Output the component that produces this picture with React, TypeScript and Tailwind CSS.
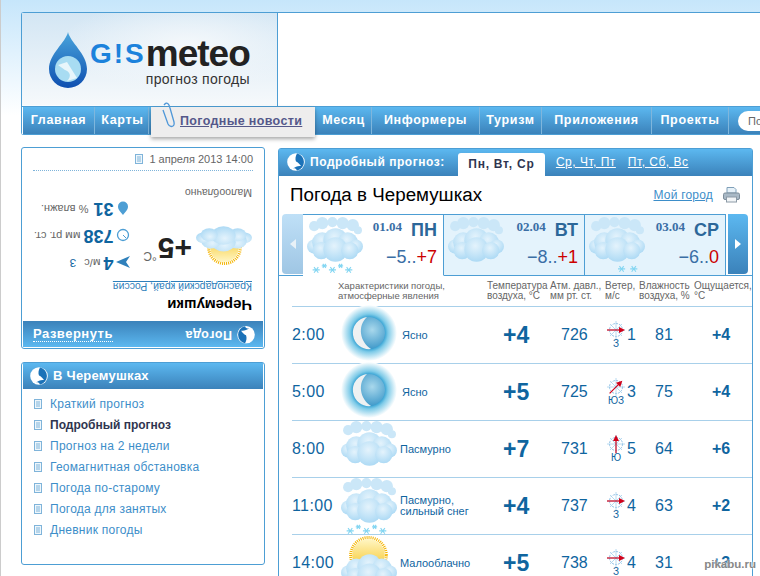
import { FC, useId } from 'react';

const navLeft = [
  { label: 'Главная', width: 'w-[72px]' },
  { label: 'Карты', width: 'w-[54px] pl-[2px]' },
];

const navRight = [
  { label: 'Месяц', width: 'w-[56px]' },
  { label: 'Информеры', width: 'w-[108px]' },
  { label: 'Туризм', width: 'w-[62px]' },
  { label: 'Приложения', width: 'w-[110px]' },
  { label: 'Проекты', width: 'w-[77px]' },
];

const menu = [
  'Краткий прогноз',
  'Подробный прогноз',
  'Прогноз на 2 недели',
  'Геомагнитная обстановка',
  'Погода по-старому',
  'Погода для занятых',
  'Дневник погоды',
];

const days = [
  { date: '01.04', name: 'ПН', low: '−5', high: '+7', snow: 4, active: true },
  { date: '02.04', name: 'ВТ', low: '−8', high: '+1', snow: 0, active: false },
  { date: '03.04', name: 'СР', low: '−6', high: '0', snow: 2, active: false },
];

type Weather = 'moon' | 'overcast' | 'snow' | 'sun';

const rows: {
  time: string;
  icon: Weather;
  desc: string[];
  temp: string;
  press: number;
  angle: number;
  dir: string;
  wind: number;
  humidity: number;
  feels: string;
}[] = [
  { time: '2:00', icon: 'moon', desc: ['Ясно'], temp: '+4', press: 726, angle: 0, dir: 'З', wind: 1, humidity: 81, feels: '+4' },
  { time: '5:00', icon: 'moon', desc: ['Ясно'], temp: '+5', press: 725, angle: -45, dir: 'ЮЗ', wind: 3, humidity: 75, feels: '+4' },
  { time: '8:00', icon: 'overcast', desc: ['Пасмурно'], temp: '+7', press: 731, angle: -90, dir: 'Ю', wind: 5, humidity: 64, feels: '+6' },
  { time: '11:00', icon: 'snow', desc: ['Пасмурно,', 'сильный снег'], temp: '+4', press: 737, angle: 0, dir: 'З', wind: 4, humidity: 63, feels: '+2' },
  { time: '14:00', icon: 'sun', desc: ['Малооблачно'], temp: '+5', press: 738, angle: 0, dir: 'З', wind: 4, humidity: 31, feels: '+3' },
];

const Swirl: FC<{ size?: number }> = ({ size = 18 }) => (
  <svg width={size} height={size} viewBox="0 0 18 18" className="shrink-0">
    <circle cx="9" cy="9" r="8.8" fill="#fff" />
    <path d="M10 .4A8.8 8.8 0 0 1 10 17.6C9 15 7 15 5.5 15.5 8.5 14 10.5 12.5 14 13 12 10.5 10.5 9 9 8.5 8 6 8.5 3 10 .4Z" fill="#1b72b8" />
  </svg>
);

const DocIcon: FC = () => (
  <svg width="8" height="10" viewBox="0 0 8 10" className="shrink-0">
    <rect x=".5" y=".5" width="7" height="9" fill="#eef6fb" stroke="#7fb4da" />
    <path d="M2 3h4M2 5h4M2 7h4" stroke="#7fb4da" />
  </svg>
);

const Snowflake: FC<{ x: number; y: number; r?: number }> = ({ x, y, r = 3.5 }) => (
  <g stroke="#84d6f2" strokeWidth="1.1">
    <path d={`M${x - r} ${y}H${x + r}M${x - r * 0.6} ${y - r * 0.8}L${x + r * 0.6} ${y + r * 0.8}M${x - r * 0.6} ${y + r * 0.8}L${x + r * 0.6} ${y - r * 0.8}`} />
  </g>
);

// puffs of the heavy front cloud, viewBox units 55 x 57
const frontPuffs: [number, number, number][] = [
  [7, 29, 7],
  [15, 25, 10],
  [28, 23, 12],
  [40, 25, 10],
  [48, 29, 7],
  [14, 33, 8.5],
  [28, 32, 12],
  [42, 33, 8.5],
];

const backPuffs: [number, number, number][] = [
  [7, 9, 5],
  [15, 6, 6],
  [25, 5, 5],
  [35, 6, 6],
  [45, 8, 6],
  [50, 13, 4],
];

const Cloud: FC<{ snow?: number; back?: boolean; sun?: boolean; compact?: boolean }> = ({ snow = 0, back = true, sun = false, compact = false }) => {
  const id = useId();
  return (
    <svg width="56" height="58" viewBox="0 0 55 57" className="shrink-0">
      <defs>
        <radialGradient id={`${id}c`} cx="45%" cy="35%" r="70%">
          <stop offset="0%" stopColor="#e4f3fc" />
          <stop offset="100%" stopColor="#a9d8f4" />
        </radialGradient>
        <linearGradient id={`${id}s`} x1="0" y1="0" x2="0" y2="1">
          <stop offset="0%" stopColor="#fff6c4" />
          <stop offset="100%" stopColor="#f5c21e" />
        </linearGradient>
      </defs>
      {sun && (
        <g>
          <circle cx="27" cy={compact ? 17 : 20} r={compact ? 15.5 : 17.5} fill="none" stroke="#f4b400" strokeWidth="3" strokeDasharray="1 1" />
          <circle cx="27" cy={compact ? 17 : 20} r={compact ? 14 : 16} fill={`url(#${id}s)`} />
        </g>
      )}
      {back && backPuffs.map(([x, y, r]) => <circle key={`b${x}`} cx={x} cy={y} r={r} fill="#cbe7f8" />)}
      <g transform={compact ? 'translate(0 5) scale(1 .75)' : sun ? 'translate(0 8)' : undefined}>
        {frontPuffs.map(([x, y, r]) => (
          <circle key={`f${x}${y}`} cx={x} cy={y} r={r} fill={`url(#${id}c)`} />
        ))}
      </g>
      {snow === 4 && (
        <>
          <Snowflake x={9} y={52} />
          <Snowflake x={17} y={48} r={2.5} />
          <Snowflake x={25} y={52} />
          <Snowflake x={33} y={48} r={2.5} />
          <Snowflake x={41} y={52} />
        </>
      )}
      {snow === 2 && (
        <>
          <Snowflake x={32} y={51} />
          <Snowflake x={44} y={51} />
        </>
      )}
    </svg>
  );
};

const Moon: FC = () => {
  const id = useId();
  return (
    <svg width="56" height="56" viewBox="0 0 56 56" className="-mt-[2px]">
      <defs>
        <radialGradient id={`${id}g`}>
          <stop offset="55%" stopColor="#2f9fd2" />
          <stop offset="68%" stopColor="#7fcbe8" />
          <stop offset="100%" stopColor="#ffffff" />
        </radialGradient>
        <radialGradient id={`${id}d`} cx="60%" cy="40%" r="70%">
          <stop offset="0%" stopColor="#a9d8ec" />
          <stop offset="100%" stopColor="#2f8fc4" />
        </radialGradient>
      </defs>
      <circle cx="28" cy="28" r="28" fill={`url(#${id}g)`} />
      <circle cx="28" cy="28" r="16" fill={`url(#${id}d)`} />
      <path d="M26 12A16 16 0 0 0 30 44C19 37 16 21 26 12Z" fill="#eef1f2" />
    </svg>
  );
};

const WeatherIcon: FC<{ kind: Weather }> = ({ kind }) => {
  if (kind === 'moon') return <Moon />;
  if (kind === 'overcast') return <Cloud />;
  if (kind === 'snow') return <Cloud snow={4} />;
  return <Cloud sun back={false} />;
};

const Compass: FC<{ angle: number; dir: string }> = ({ angle, dir }) => (
  <div className="flex w-[20px] flex-col items-center">
    <svg width="18" height="18" viewBox="0 0 18 18">
      <circle cx="9" cy="9" r="6.5" fill="none" stroke="#8fc0e6" strokeDasharray="2 1" />
      <path d="M9 0v18M0 9h18M3 3l12 12M15 3L3 15" stroke="#a6d0ec" strokeWidth=".8" />
      <g transform={`rotate(${angle} 9 9)`}>
        <path d="M0 9H13" stroke="#d0021b" strokeWidth="1.2" />
        <path d="M12 6l6 3-6 3Z" fill="#d0021b" />
      </g>
    </svg>
    <span className="text-[10px] leading-[10px] text-[#0f659f]">{dir}</span>
  </div>
);

const Printer: FC = () => (
  <svg width="17" height="16" viewBox="0 0 17 16">
    <path d="M4 .5h7l2 2V6H4Z" fill="#e6f1f8" stroke="#7f9fb8" />
    <rect x=".5" y="6" width="16" height="6.5" rx="1.5" fill="#a9b9c6" stroke="#7d8d9a" />
    <rect x="3.5" y="10" width="10" height="5" fill="#f2f5f7" stroke="#8c9aa6" />
  </svg>
);

const Logo: FC = () => {
  const id = useId();
  return (
    <div className="flex h-[92px] w-[255px] shrink-0 bg-[radial-gradient(ellipse_at_65%_35%,#f4f8fb_0%,transparent_55%),linear-gradient(#d3e6f4,#f6f9fb)] pl-[26px]">
      <svg width="40" height="56" viewBox="0 0 40 56" className="mt-[19px] shrink-0">
        <defs>
          <linearGradient id={`${id}d`} x1="0" y1="0" x2="0" y2="1">
            <stop offset="0%" stopColor="#4aa5dc" />
            <stop offset="100%" stopColor="#0e4fb0" />
          </linearGradient>
        </defs>
        <path d="M20 0C22 10 39 22 39 37A19 19 0 0 1 1 37C1 22 18 10 20 0Z" fill={`url(#${id}d)`} />
        <circle cx="20" cy="37" r="13" fill="#a8dcf2" />
        <path d="M10 33l9-3 10 16-10 3C24 44 22 40 17 38Z" fill="#e8f6fb" />
      </svg>
      <div className="ml-[2px] flex flex-col items-end pt-[24px]">
        <div className="flex h-[34px] items-center">
          <span className="text-[28px] font-bold leading-[34px] tracking-[2px] text-[#1b82dc]">G!S</span>
          <span className="text-[37px] font-bold leading-[34px] tracking-[-1px] text-[#222]">meteo</span>
        </div>
        <span className="text-[14px] leading-[16px] tracking-[0.3px] text-[#333]">прогноз погоды</span>
      </div>
    </div>
  );
};

const App: FC = () => {
  return (
    <div className="relative h-[576px] w-[760px] overflow-hidden border-l border-[#cccccc] bg-gradient-to-b from-[#c6e6fb] via-white via-[20%] to-white font-['Liberation_Sans',Arial,sans-serif]">
      <div className="pl-[20px] pt-[12px]">
        <div className="flex h-[94px] rounded-tl-[3px] border-l border-t border-[#4d9ed4]">
          <div className="border-r border-[#4d9ed4]">
            <Logo />
          </div>
          <div className="flex-1 bg-white" />
        </div>

        <div className="relative flex h-[29px] rounded-bl-[3px] border-y border-l border-[#4d9ed4] bg-white text-[12.5px] font-bold tracking-[0.7px] text-white">
          <div className="flex flex-1 border-l border-white bg-gradient-to-b from-[#5cb8f0] to-[#3b82ba]">
            {navLeft.map(item => (
              <div key={item.label} className={`flex items-center justify-center border-r border-[#7fb6dc] ${item.width}`}>
                {item.label}
              </div>
            ))}
            <div className="relative z-10 ml-[2px] h-[30px] w-[164px] bg-[#eeeded] pl-[29px] pt-[5px] tracking-[0.35px] text-[#55588a] shadow-[0_2px_4px_rgba(0,0,0,0.35)]">
              <span className="underline">Погодные новости</span>
              <svg width="16" height="27" viewBox="0 0 16 27" className="absolute -top-[5px] left-[9px]">
                <path d="M4 3C7-1 9 2 10 6l4 14c1 5-4 6-6 2L3 8" fill="none" stroke="#4f97d8" strokeWidth="1.3" />
              </svg>
            </div>
            <div className="w-[1px]" />
            {navRight.map(item => (
              <div key={item.label} className={`flex items-center justify-center border-r border-[#7fb6dc] ${item.width}`}>
                {item.label}
              </div>
            ))}
            <div className="ml-[9px] mt-[4px] h-[20px] flex-1 rounded-l-[10px] bg-white pl-[10px] text-[11px] font-normal leading-[20px] tracking-normal text-[#666]">
              По
            </div>
          </div>
        </div>

        <div className="mt-[12px] flex items-start">
          <aside className="w-[244px] shrink-0">
            <section className="h-[202px] rounded-[3px] border border-[#4d9ed4] bg-white">
              <div className="mx-[11px] flex h-[23px] items-center justify-end gap-[6px] border-b border-dotted border-[#7fb4da] text-[11px] text-[#666]">
                <DocIcon />1 апреля 2013 14:00
              </div>
              <div className="mx-[1px] h-[150px] rotate-180 px-[11px] pt-[8px]">
                <div className="text-[15px] font-bold leading-[16px] text-black">Черемушки</div>
                <div className="mt-[4px] text-[10.5px] leading-[13px] text-[#2f80bb] underline">Краснодарский край, Россия</div>
                <div className="mt-[3px] flex h-[72px]">
                  <div className="flex w-[125px] items-start pt-[5px]">
                    <div className="mt-[7px]">
                      <Cloud sun back={false} compact />
                    </div>
                    <span className="ml-[4px] mt-[7px] text-[30px] font-bold leading-[34px] text-[#222]">+5</span>
                    <span className="ml-[1px] mt-[7px] text-[12px] text-[#666]">°C</span>
                  </div>
                  <div className="flex flex-col whitespace-nowrap pt-[1px]">
                    <div className="flex h-[27px] items-center">
                      <svg width="14" height="14" viewBox="0 0 14 14"><path d="M0 1L14 7 0 13l4-6Z" fill="#2f80bb" /></svg>
                      <span className="ml-[3px] text-[18px] font-bold text-[#0f659f]">4</span>
                      <span className="ml-[3px] text-[11px] text-[#666]">м/с</span>
                      <span className="ml-[8px] text-[11px] text-[#0f659f]">З</span>
                    </div>
                    <div className="flex h-[27px] items-center">
                      <svg width="14" height="14" viewBox="0 0 14 14"><circle cx="7" cy="7" r="5.5" fill="none" stroke="#4d9ed4" strokeWidth="1.3" /><path d="M7 7L4 4" stroke="#4d9ed4" /></svg>
                      <span className="ml-[3px] text-[18px] font-bold text-[#0f659f]">738</span>
                      <span className="ml-[3px] text-[11px] text-[#666]">мм рт. ст.</span>
                    </div>
                    <div className="flex h-[27px] items-center">
                      <svg width="14" height="14" viewBox="0 0 14 14"><path d="M7 0C9 3 12 5 12 8.500A5 5 0 0 1 2 8.500C2 5 5 3 7 0Z" fill="#4d9ed4" /></svg>
                      <span className="ml-[3px] text-[18px] font-bold text-[#0f659f]">31</span>
                      <span className="ml-[5px] text-[11px] text-[#666]">% влажн.</span>
                    </div>
                  </div>
                </div>
                <div className="mt-[6px] text-[10.5px] leading-[13px] text-[#666]">Малооблачно</div>
              </div>
              <div className="mx-[1px] flex h-[26px] items-center justify-between bg-gradient-to-b from-[#3b82ba] to-[#5cb8f0] pl-[10px] pr-[8px] font-bold text-white">
                <span className="border-b border-dotted border-white text-[13px] leading-[15px] tracking-[0.5px]">Развернуть</span>
                <span className="flex rotate-180 items-center gap-[5px] text-[12.5px] tracking-[0.5px]">
                  <Swirl />
                  Погода
                </span>
              </div>
            </section>

            <section className="mt-[13px] h-[203px] rounded-[3px] border border-[#4d9ed4] bg-white">
              <div className="mx-[1px] flex h-[26px] items-center gap-[5px] bg-gradient-to-b from-[#5cb8f0] to-[#3b82ba] pl-[7px] text-[13px] font-bold tracking-[0.25px] text-white">
                <Swirl />В Черемушках
              </div>
              <ul className="mt-[4px] pl-[12px] text-[12px] tracking-[0.25px] text-[#3d8ec9]">
                {menu.map((item, i) => (
                  <li key={item} className={`flex h-[21px] items-center gap-[8px] ${i === 1 ? 'font-bold tracking-normal text-[#2f3550]' : ''}`}>
                    <DocIcon />
                    {item}
                  </li>
                ))}
              </ul>
            </section>
          </aside>

          <main className="ml-[13px] mt-[1px] h-[500px] w-[475px] shrink-0 rounded-t-[3px] border border-[#4d9ed4] bg-white">
            <div className="flex h-[27px] items-end bg-gradient-to-b from-[#5cb8f0] to-[#3b82ba] pl-[8px] text-[12px] font-bold text-white">
              <div className="flex h-[26px] items-center gap-[5px] self-start tracking-[0.55px]">
                <Swirl />
                Подробный прогноз:
              </div>
              <div className="ml-[13px] flex h-[23px] w-[87px] items-center justify-center rounded-t-[3px] bg-white pb-[2px] tracking-[0.75px] text-[#2f3550]">Пн, Вт, Ср</div>
              <div className="flex h-[26px] items-center gap-[12px] self-start pl-[11px] text-[12px] font-normal tracking-[0.5px] underline">
                <span>Ср, Чт, Пт</span>
                <span>Пт, Сб, Вс</span>
              </div>
            </div>
            <div className="flex h-[38px] items-center pl-[11px] pr-[12px]">
              <h1 className="flex-1 text-[18.8px] leading-[20px] text-black">Погода в Черемушках</h1>
              <span className="mr-[10px] text-[12px] tracking-[0.2px] text-[#3d8ec9] underline">Мой город</span>
              <Printer />
            </div>

            <div className="flex h-[62px] items-stretch border-b border-[#4d9ed4] pl-[3px]">
              <div className="mb-[1px] flex w-[21px] items-center justify-center rounded-l-[4px] bg-gradient-to-b from-[#bfe0f7] to-[#9fc6e4]">
                <svg width="6" height="10" viewBox="0 0 6 10"><path d="M6 0v10L0 5Z" fill="#e8f1f7" /></svg>
              </div>
              {days.map(day => (
                <div
                  key={day.date}
                  className={`-mb-[1px] flex w-[141px] border border-l-0 border-[#4d9ed4] pl-[4px] first:border-l ${day.active ? 'border-b-white bg-white' : 'bg-[#e4f3fc]'}`}
                >
                  <div className="-mt-[1px] pt-[3px]">
                    <Cloud snow={day.snow} />
                  </div>
                  <div className="flex flex-1 flex-col items-end pr-[6px] pt-[4px]">
                    <div className="flex items-start gap-[9px]">
                      <span className="font-['Liberation_Serif',serif] text-[13px] font-bold leading-[16px] text-[#3a6ea5]">{day.date}</span>
                      <span className="text-[18px] font-bold leading-[22px] text-[#2c6799]">{day.name}</span>
                    </div>
                    <div className="mt-[6px] text-[18px] leading-[20px] text-[#3a6ea5]">
                      {day.low}..<span className="text-[#cc0000]">{day.high}</span>
                    </div>
                  </div>
                </div>
              ))}
              <div className="mb-[1px] ml-[2px] flex w-[20px] items-center justify-center rounded-r-[4px] bg-gradient-to-b from-[#5cb8f0] to-[#3b82ba]">
                <svg width="6" height="10" viewBox="0 0 6 10"><path d="M0 0v10l6-5Z" fill="#ffffff" /></svg>
              </div>
            </div>

            <div className="ml-[13px]">
              <div className="grid h-[30px] grid-cols-[46px_149px_63px_55px_34px_55px_1fr] items-start pt-[5px] text-[10px] leading-[10px] text-[#666]">
                <div />
                <div className="text-[9.5px]">Характеристики погоды,<br />атмосферные явления</div>
                <div>Температура<br />воздуха, °C</div>
                <div>Атм. давл.,<br />мм рт. ст.</div>
                <div>Ветер,<br />м/с</div>
                <div>Влажность<br />воздуха, %</div>
                <div className="whitespace-nowrap">Ощущается,<br />°C</div>
              </div>
              {rows.map(row => (
                <div
                  key={row.time}
                  className="grid h-[57px] grid-cols-[49px_59px_103px_58px_45px_20px_29px_57px_1fr] items-center border-t border-[#a8d0ea] text-[16px] text-[#0f659f]"
                >
                  <div className="tracking-[0.4px]">{row.time}</div>
                  <div className="h-[56px] overflow-visible">
                    <WeatherIcon kind={row.icon} />
                  </div>
                  <div className={`text-[11px] leading-[11px] ${row.icon === 'moon' ? 'pl-[2px]' : ''}`}>
                    {row.desc.map(line => (
                      <div key={line}>{line}</div>
                    ))}
                  </div>
                  <div className="text-[23px] font-bold">{row.temp}</div>
                  <div>{row.press}</div>
                  <Compass angle={row.angle} dir={row.dir} />
                  <div className="pl-[1px]">{row.wind}</div>
                  <div>{row.humidity}</div>
                  <div className="font-bold">{row.feels}</div>
                </div>
              ))}
            </div>
          </main>
        </div>
      </div>
      <div className="absolute bottom-[3px] right-[4px] text-[11.5px] font-bold text-[#888] [text-shadow:0_0_2px_#fff,0_0_2px_#fff]">pikabu.ru</div>
    </div>
  );
};

export default App;
